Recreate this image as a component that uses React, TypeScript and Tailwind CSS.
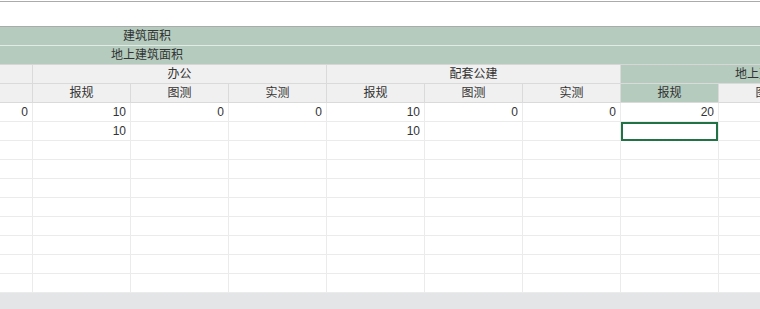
const font = { fontFamily: '"Liberation Sans", "Noto Sans CJK SC", sans-serif' };

const subCols = ['报规', '图测', '实测', '报规', '图测', '实测', '报规', '图测'];

const rows: string[][] = [
  ['0', '10', '0', '0', '10', '0', '0', '20', ''],
  ['', '10', '', '', '10', '', '', '', ''],
  ['', '', '', '', '', '', '', '', ''],
  ['', '', '', '', '', '', '', '', ''],
  ['', '', '', '', '', '', '', '', ''],
  ['', '', '', '', '', '', '', '', ''],
  ['', '', '', '', '', '', '', '', ''],
  ['', '', '', '', '', '', '', '', ''],
  ['', '', '', '', '', '', '', '', ''],
  ['', '', '', '', '', '', '', '', ''],
];

export default function App() {
  return (
    <div className="w-[760px] h-[309px] overflow-hidden bg-white text-[12px] text-[#333333] flex flex-col" style={font}>
      {/* top toolbar strip */}
      <div className="h-[26px] shrink-0 border-t border-b border-[#ababab] mt-px" />

      {/* header */}
      <div className="shrink-0 w-[1000px]">
        <div className="h-[19px] bg-[#b4cbbe] border-b border-[#e3ebe6] flex items-center">
          <div className="w-[294px] text-center leading-[18px]">建筑面积</div>
        </div>
        <div className="h-[19px] bg-[#b4cbbe] border-b border-[#d6d6d6] flex items-center">
          <div className="w-[294px] text-center leading-[18px]">地上建筑面积</div>
        </div>
        <div className="h-[19px] flex border-b border-[#dadada]">
          <div className="w-[33px] bg-[#f0f0f0] border-r border-[#dadada]" />
          <div className="w-[294px] bg-[#f0f0f0] border-r border-[#dadada] text-center leading-[18px]">办公</div>
          <div className="w-[294px] bg-[#f0f0f0] border-r border-[#dadada] text-center leading-[18px]">配套公建</div>
          <div className="w-[294px] bg-[#b4cbbe] leading-[18px] pl-[114px] whitespace-nowrap">地上建筑</div>
        </div>
        <div className="h-[19px] flex border-b border-[#dadada]">
          <div className="w-[33px] bg-[#f0f0f0] border-r border-[#dadada]" />
          {subCols.map((c, i) => (
            <div
              key={i}
              className={
                'w-[98px] border-r border-[#dadada] text-center leading-[18px] ' +
                (i === 6 ? 'bg-[#b4cbbe]' : 'bg-[#f0f0f0]')
              }
            >
              {c}
            </div>
          ))}
        </div>
      </div>

      {/* body */}
      <div className="shrink-0 w-[1000px]">
        {rows.map((r, ri) => (
          <div key={ri} className="h-[19px] flex border-b border-[#ebebeb]">
            {r.map((v, ci) => (
              <div
                key={ci}
                className={
                  (ci === 0 ? 'w-[33px] ' : 'w-[98px] ') +
                  'border-r border-[#ebebeb] text-right pr-[4px] leading-[18px] relative'
                }
              >
                {v}
                {ri === 1 && ci === 7 && (
                  <div className="absolute left-[0px] top-[0px] w-[97px] h-[19px] border-2 border-[#217346]" />
                )}
              </div>
            ))}
          </div>
        ))}
      </div>

      {/* footer */}
      <div className="flex-1 bg-[#e4e5e7]" />
    </div>
  );
}
